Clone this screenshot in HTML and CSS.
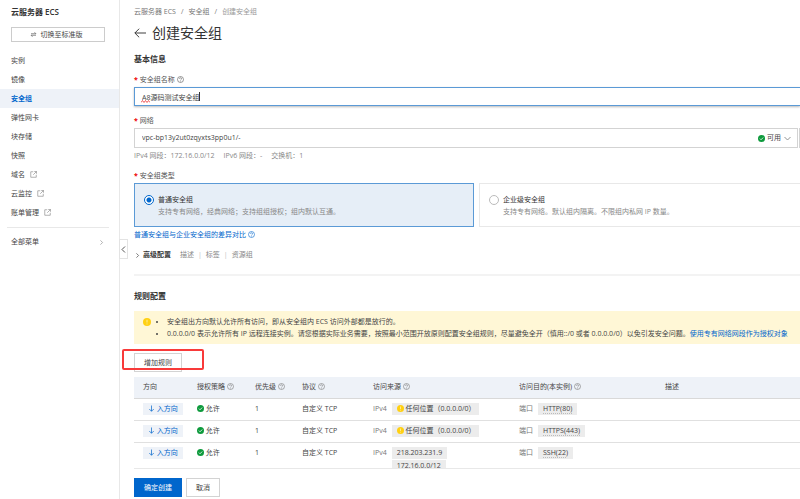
FILE: index.html
```html
<!DOCTYPE html>
<html lang="zh-CN">
<head>
  <meta charset="UTF-8" />
  <meta name="viewport" content="width=device-width, initial-scale=1.0" />
  <title>创建安全组</title>
  <link rel="stylesheet" href="styles.css">
</head>
<body>
  <!-- shared icons -->
  <svg class="sprite" aria-hidden="true">
    <symbol id="help" viewBox="0 0 14 14">
      <circle cx="7" cy="7" r="6" fill="none" stroke="currentColor" stroke-width="1.2" />
      <path d="M5 5.6a2 2 0 1 1 2.9 1.8c-.6.3-.9.7-.9 1.3" fill="none" stroke="currentColor" stroke-width="1.2" />
      <circle cx="7" cy="10.3" r=".8" fill="currentColor" />
    </symbol>
    <symbol id="ok" viewBox="0 0 14 14">
      <circle cx="7" cy="7" r="7" fill="#0d9a3c" />
      <path d="M3.8 7.2l2.3 2.3 4.2-4.4" fill="none" stroke="#fff" stroke-width="1.6" />
    </symbol>
    <symbol id="warn" viewBox="0 0 14 14">
      <circle cx="7" cy="7" r="7" fill="#ffd012" />
      <path d="M7 3v5M7 9.6v1.6" stroke="#fff3c0" stroke-width="1.4" />
    </symbol>
    <symbol id="external" viewBox="0 0 14 14">
      <path d="M6.5 1.5h-5v11h11v-5M8.5 1h4.5v4.5M13 1L6.5 7.5" fill="none" stroke="currentColor" stroke-width="1.3" />
    </symbol>
    <symbol id="down" viewBox="0 0 14 14">
      <path d="M7 1v11.5M2.5 8L7 12.5 11.5 8" fill="none" stroke="currentColor" stroke-width="1.4" />
    </symbol>
    <symbol id="chevron" viewBox="0 0 14 14">
      <path d="M4 1l6 6-6 6" fill="none" stroke="currentColor" stroke-width="1.8" />
    </symbol>
  </svg>

  <div class="app">
    <aside class="sidebar">
      <h2>云服务器 ECS</h2>
      <button class="switch" type="button">
        <svg class="icon" viewBox="0 0 14 14"><path d="M2 5.5h10L9 2.5M12 8.500H2l3 3" fill="none" stroke="currentColor" stroke-width="1.2" /></svg>
        切换至标准版
      </button>
      <nav>
        <a href="#">实例</a>
        <a href="#">镜像</a>
        <a href="#" class="active">安全组</a>
        <a href="#">弹性网卡</a>
        <a href="#">块存储</a>
        <a href="#">快照</a>
        <a href="#">域名 <svg class="icon"><use href="#external" /></svg></a>
        <a href="#">云监控 <svg class="icon"><use href="#external" /></svg></a>
        <a href="#">账单管理 <svg class="icon"><use href="#external" /></svg></a>
        <a href="#" class="all">全部菜单 <svg class="icon small"><use href="#chevron" /></svg></a>
      </nav>
      <button class="collapse" type="button" aria-label="收起"><svg class="icon flip"><use href="#chevron" /></svg></button>
    </aside>

    <main>
      <div class="content">
        <div class="breadcrumb">
          <a href="#">云服务器 ECS</a><i>/</i><a href="#">安全组</a><i>/</i><span>创建安全组</span>
        </div>
        <h1>
          <svg class="back" viewBox="0 0 14 14"><path d="M14 7H1M6 2L1 7l5 5" fill="none" stroke="currentColor" stroke-width="1.1" /></svg>
          创建安全组
        </h1>

        <h3>基本信息</h3>
        <label class="field-label" for="name">安全组名称 <svg class="icon"><use href="#help" /></svg></label>
        <div class="name-box">
          <input type="text" id="name" value="A8源码测试安全组" />
          <svg class="typo" viewBox="0 0 9 3"><path d="M0 2.5l1.5-2 1.5 2 1.5-2 1.5 2 1.5-2 1.5 2" fill="none" stroke="#e33" stroke-width=".8" /></svg>
          <span class="caret"></span>
        </div>

        <label class="field-label" for="vpc">网络</label>
        <div class="network">
          <div class="select-box">
            <select id="vpc"><option>vpc-bp13y2ut0zqyxts3pp0u1/-</option></select>
            <div class="status"><svg class="icon"><use href="#ok" /></svg>可用<svg class="icon arrow"><use href="#chevron" /></svg></div>
          </div>
          <div class="next-box"></div>
        </div>
        <div class="hint"><span>IPv4 网段：172.16.0.0/12</span><span>IPv6 网段：-</span><span>交换机：1</span></div>

        <div class="field-label">安全组类型</div>
        <div class="types">
          <label class="type selected">
            <input type="radio" name="type" checked />
            <span><b>普通安全组</b>支持专有网络，经典网络；支持组组授权；组内默认互通。</span>
          </label>
          <label class="type">
            <input type="radio" name="type" />
            <span><b>企业级安全组</b>支持专有网络。默认组内隔离。不限组内私网 IP 数量。</span>
          </label>
        </div>
        <a href="#" class="compare">普通安全组与企业安全组的差异对比 <svg class="icon"><use href="#help" /></svg></a>
        <div class="advanced">
          <svg class="icon small"><use href="#chevron" /></svg>
          <b>高级配置</b><span>描述</span><i>|</i><span>标签</span><i>|</i><span>资源组</span>
        </div>

        <h3 class="rules-title">规则配置</h3>
        <div class="notice">
          <svg class="icon big"><use href="#warn" /></svg>
          <ul>
            <li>安全组出方向默认允许所有访问，即从安全组内 ECS 访问外部都是放行的。</li>
            <li>0.0.0.0/0 表示允许所有 IP 远程连接实例。请您根据实际业务需要，按照最小范围开放原则配置安全组规则，尽量避免全开（慎用::/0 或者 0.0.0.0/0）以免引发安全问题。<a href="#">使用专有网络网段作为授权对象</a></li>
          </ul>
        </div>
        <div class="toolbar">
          <button class="btn" type="button">增加规则</button>
          <div class="mark"></div>
        </div>

        <table>
          <colgroup><col class="c-dir" /><col class="c-policy" /><col class="c-prio" /><col class="c-proto" /><col class="c-addr" /><col class="c-addr" /><col /></colgroup>
          <thead>
            <tr>
              <th>方向</th>
              <th>授权策略 <svg class="icon"><use href="#help" /></svg></th>
              <th>优先级 <svg class="icon"><use href="#help" /></svg></th>
              <th>协议 <svg class="icon"><use href="#help" /></svg></th>
              <th>访问来源 <svg class="icon"><use href="#help" /></svg></th>
              <th>访问目的(本实例) <svg class="icon"><use href="#help" /></svg></th>
              <th>描述</th>
            </tr>
          </thead>
          <tbody>
            <tr>
              <td><span class="dir"><svg class="icon"><use href="#down" /></svg> 入方向</span></td>
              <td><svg class="icon"><use href="#ok" /></svg> 允许</td>
              <td>1</td>
              <td>自定义 TCP</td>
              <td><div class="pair"><span>IPv4</span><span class="tag any"><svg class="icon"><use href="#warn" /></svg> 任何位置（0.0.0.0/0）</span></div></td>
              <td><div class="pair"><span>端口</span><span class="tag"><u>HTTP(80)</u></span></div></td>
              <td></td>
            </tr>
            <tr>
              <td><span class="dir"><svg class="icon"><use href="#down" /></svg> 入方向</span></td>
              <td><svg class="icon"><use href="#ok" /></svg> 允许</td>
              <td>1</td>
              <td>自定义 TCP</td>
              <td><div class="pair"><span>IPv4</span><span class="tag any"><svg class="icon"><use href="#warn" /></svg> 任何位置（0.0.0.0/0）</span></div></td>
              <td><div class="pair"><span>端口</span><span class="tag"><u>HTTPS(443)</u></span></div></td>
              <td></td>
            </tr>
            <tr>
              <td><span class="dir"><svg class="icon"><use href="#down" /></svg> 入方向</span></td>
              <td><svg class="icon"><use href="#ok" /></svg> 允许</td>
              <td>1</td>
              <td>自定义 TCP</td>
              <td><div class="pair"><span>IPv4</span><div class="tags"><span class="tag">218.203.231.9</span><span class="tag">172.16.0.0/12</span></div></div></td>
              <td><div class="pair"><span>端口</span><span class="tag"><u>SSH(22)</u></span></div></td>
              <td></td>
            </tr>
          </tbody>
        </table>
      </div>
      <footer>
        <button class="btn primary" type="button">确定创建</button>
        <button class="btn cancel" type="button">取消</button>
      </footer>
    </main>
  </div>
</body>
</html>
```
FILE: styles.css
```css
* {
  box-sizing: border-box;
}
body {
  margin: 0;
  font-family: "Open Sans", "Noto Sans CJK SC", sans-serif;
  font-size: 7px;
  line-height: 12px;
  color: #444;
  background: #fff;
}
a {
  color: inherit;
  text-decoration: none;
}
i {
  font-style: normal;
}
button, input, select {
  font: inherit;
  color: inherit;
}
.sprite {
  position: absolute;
  width: 0;
  height: 0;
}
.icon {
  width: 7px;
  height: 7px;
  vertical-align: -1px;
  flex: none;
}
.icon.small {
  width: 5px;
  height: 5px;
}
.icon.big {
  width: 8px;
  height: 8px;
}
.app {
  display: flex;
  height: 100vh;
  overflow: hidden;
}

/* sidebar */
.sidebar {
  position: relative;
  flex: none;
  width: 120px;
  border-right: 1px solid #e8e8e8;
}
.sidebar h2 {
  margin: 6px 11px 9px;
  font-size: 8px;
  line-height: 12px;
  font-weight: 600;
  color: #333;
}
.switch {
  display: flex;
  align-items: center;
  justify-content: center;
  gap: 4px;
  width: 94px;
  height: 15px;
  margin: 0 11px 9px;
  padding: 0 4px 0 0;
  border: 1px solid #ccc;
  background: #fff;
}
nav a {
  display: flex;
  align-items: center;
  gap: 5px;
  height: 19px;
  padding: 0 11px;
}
nav .active {
  background: #eef2f8;
  color: #06c;
  font-weight: 600;
}
nav .icon {
  color: #888;
}
nav .all {
  justify-content: space-between;
  height: 29px;
  margin: 5px 10px 0 7px;
  padding: 0 5px 0 4px;
  border-top: 1px solid #e8e8e8;
}
.collapse {
  position: absolute;
  left: 119px;
  top: 239px;
  width: 9px;
  height: 20px;
  padding: 0;
  border: 1px solid #e3e3e3;
  background: #fff;
  line-height: 7px;
}
.flip {
  transform: scaleX(-1);
}

/* page */
main {
  flex: 1;
  min-width: 0;
  display: flex;
  flex-direction: column;
  padding-left: 14px;
}
.content {
  flex: 1;
  min-height: 0;
  overflow: hidden;
  margin-left: -14px;
  padding: 6px 0 0 14px;
}
.breadcrumb {
  color: #777;
}
.breadcrumb i {
  margin: 0 5px;
}
.breadcrumb span {
  color: #999;
}
h1 {
  display: flex;
  align-items: center;
  gap: 6px;
  margin: 5px 0 10px;
  font-size: 14px;
  line-height: 20px;
  font-weight: 400;
  color: #333;
}
.back {
  width: 12px;
  height: 12px;
}
h3 {
  margin: 4px 0 9px;
  font-size: 8px;
  line-height: 12px;
  font-weight: 600;
  color: #333;
}
.field-label {
  display: block;
  margin-bottom: 1px;
  color: #555;
}
.field-label::before {
  content: "*";
  margin-right: 2px;
  color: #e00;
  font-weight: 700;
}
.name-box {
  position: relative;
  margin-bottom: 9px;
}
.name-box input {
  display: block;
  width: 100%;
  height: 19px;
  padding: 0 7px;
  border: 1px solid #5b9ad6;
  border-right: 0;
  outline: 0;
  box-shadow: 0 1px 2px #bbb;
}
.typo {
  position: absolute;
  left: 7px;
  top: 13px;
  width: 9px;
  height: 3px;
}
.caret {
  position: absolute;
  left: 65px;
  top: 5px;
  width: 1px;
  height: 9px;
  background: #333;
}
.network {
  display: flex;
  gap: 1px;
}
.select-box {
  position: relative;
  flex: 1;
}
.select-box select {
  display: block;
  appearance: none;
  width: 100%;
  height: 20px;
  padding: 0 7px;
  border: 1px solid #d3d3d3;
  border-radius: 0;
  background: #fff;
}
.status {
  position: absolute;
  right: 7px;
  top: 4px;
  display: flex;
  align-items: center;
  gap: 2px;
}
.status .arrow {
  margin-left: 1px;
  color: #888;
  transform: rotate(90deg);
}
.next-box {
  width: 1px;
  border: 1px solid #d3d3d3;
  border-width: 1px 0 1px 1px;
}
.hint {
  display: flex;
  gap: 9px;
  margin: 2px 0 8px;
  color: #888;
}
.types {
  display: grid;
  grid-template-columns: 36fr 34fr;
  gap: 5px;
}
.type {
  display: flex;
  gap: 4px;
  height: 44px;
  padding: 10px 9px;
  border: 1px solid #e8e8e8;
  border-right: 0;
  color: #888;
}
.type.selected {
  border: 1px solid #5b9ad6;
  background: #e6eef7;
}
.type b {
  display: block;
  font-weight: 400;
  color: #333;
}
.type input {
  appearance: none;
  flex: none;
  width: 10px;
  height: 10px;
  margin: 1px 0 0;
  border: 1px solid #bbb;
  border-radius: 50%;
  background: #fff;
}
.type input:checked {
  border-color: #06c;
  background: radial-gradient(#06c 2px, #fff 3px);
}
.compare {
  display: block;
  margin-top: 2px;
  color: #06c;
}
.advanced {
  display: flex;
  align-items: center;
  margin-top: 8px;
  padding: 0 0 13px 1px;
  border-bottom: 2px solid #f3f3f3;
  color: #888;
}
.advanced .icon {
  color: #333;
}
.advanced b {
  margin: 0 9px 0 3px;
  font-weight: 600;
  color: #333;
}
.advanced i {
  margin: 0 4px;
  color: #bbb;
}
.rules-title {
  margin-top: 14px;
}
.notice {
  display: flex;
  gap: 7px;
  height: 33px;
  padding: 5px 9px;
  background: #fff7d6;
}
.notice .icon {
  margin-top: 2px;
}
.notice ul {
  margin: 0;
  padding-left: 9px;
  white-space: nowrap;
}
.notice a {
  color: #06c;
}
.toolbar {
  position: relative;
  margin: 9px 0 5px;
}
.btn {
  display: block;
  height: 19px;
  padding: 0 9px;
  border: 1px solid #d3d3d3;
  background: #fff;
}
.mark {
  position: absolute;
  left: -12px;
  top: -4px;
  width: 82px;
  height: 21px;
  border: 2px solid #f83a3a;
  border-radius: 2px;
}

/* rules table */
table {
  width: 100%;
  table-layout: fixed;
  border-collapse: collapse;
}
.c-dir {
  width: 54px;
}
.c-policy {
  width: 58px;
}
.c-prio {
  width: 47px;
}
.c-proto {
  width: 71px;
}
.c-addr {
  width: 146px;
}
th {
  height: 21px;
  padding: 0 0 0 9px;
  border-bottom: 1px solid #d9d9d9;
  background: #eef2f8;
  font-weight: 400;
  text-align: left;
  white-space: nowrap;
}
td {
  padding: 4px 0 5px 9px;
  border-bottom: 1px solid #e0e0e0;
  vertical-align: top;
  white-space: nowrap;
}
th .icon {
  color: #777;
}
.dir {
  display: block;
  width: 40px;
  padding-left: 5px;
  background: #eef2f8;
  color: #06c;
}
.pair {
  display: flex;
  gap: 5px;
  color: #777;
}
.tags {
  display: flex;
  flex-direction: column;
  align-items: flex-start;
  gap: 1px;
}
.tag {
  padding: 0 5px;
  background: #ececec;
  color: #444;
}
.any {
  width: 87px;
}
.tag u {
  text-decoration: underline dotted #bbb 1px;
  text-underline-offset: 2px;
}
footer {
  display: flex;
  gap: 4px;
  padding: 9px 0 2px;
  border-top: 1px solid #e8e8e8;
}
.primary {
  border-color: #06c;
  background: #06c;
  color: #fff;
}
```
